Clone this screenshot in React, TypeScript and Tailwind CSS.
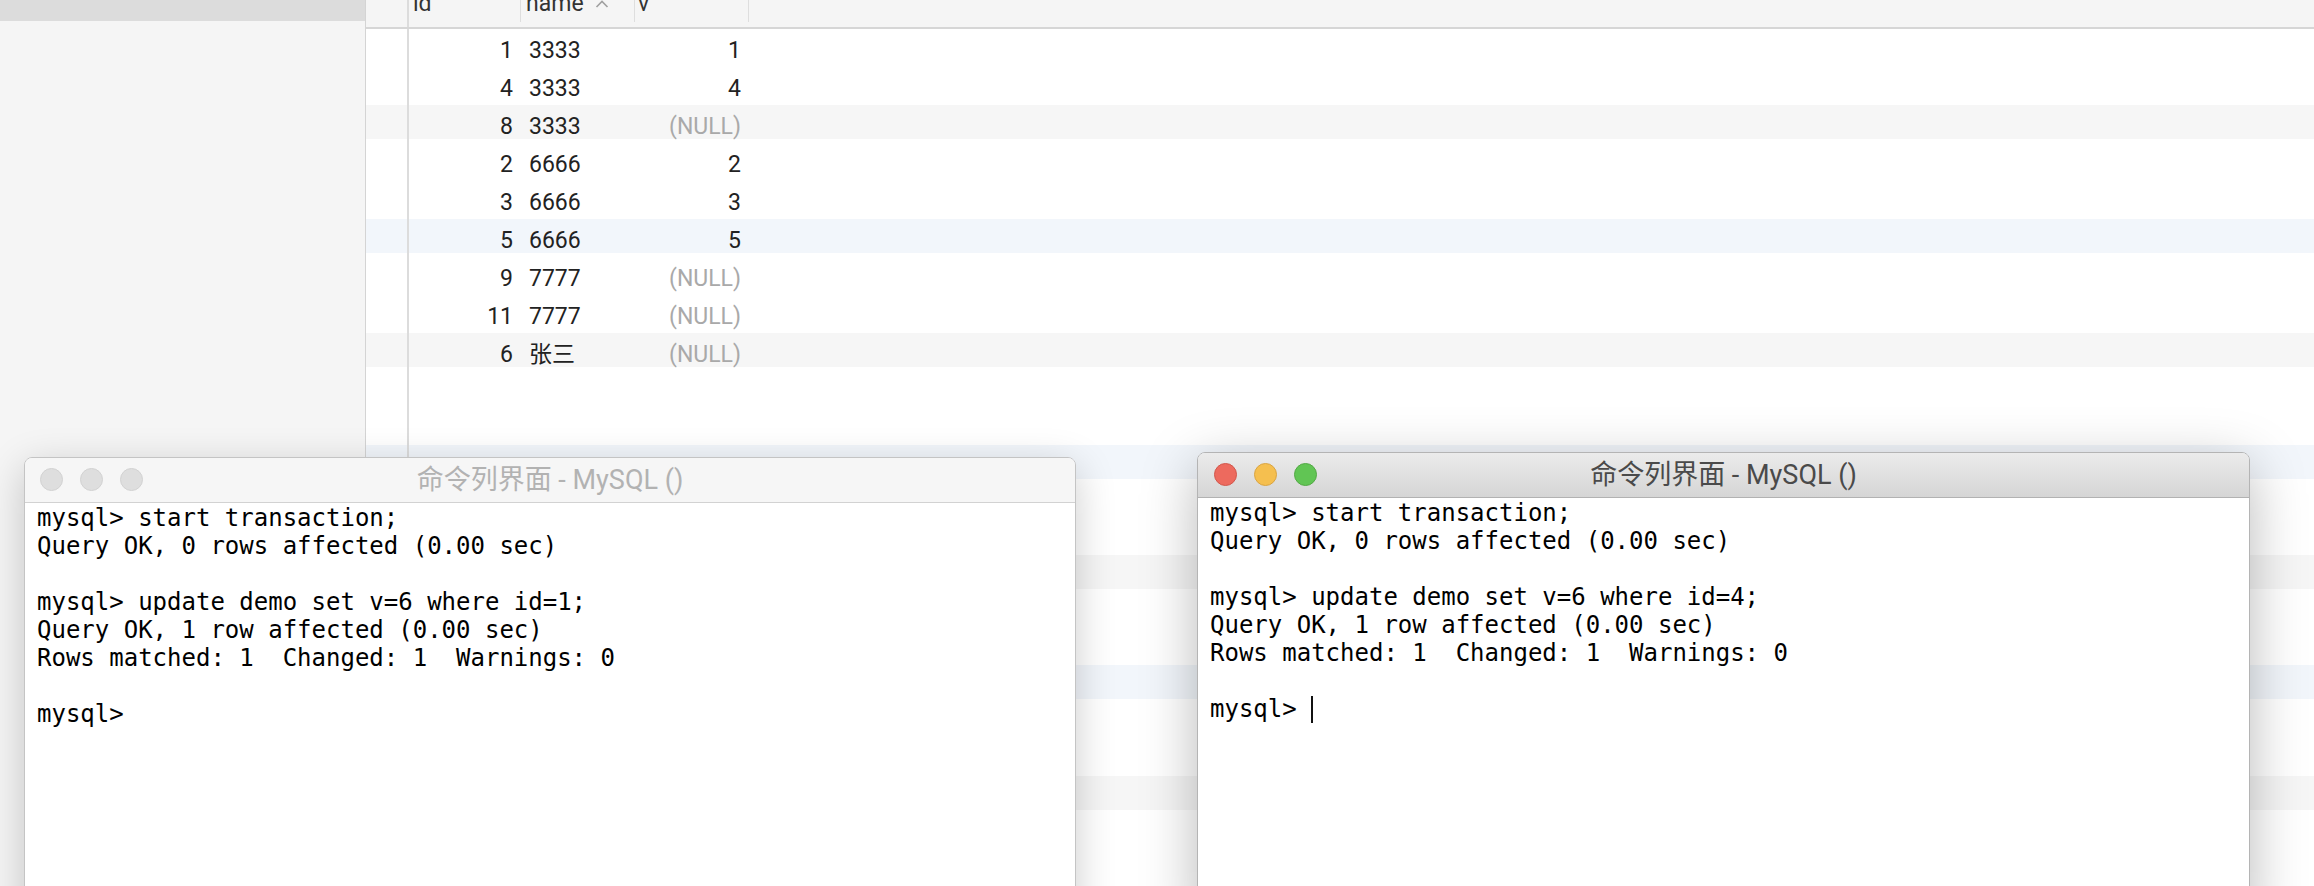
import React from "react";

type Row = { id: string; name: string; v: string | null };

const data: Row[] = [
  { id: "1", name: "3333", v: "1" },
  { id: "4", name: "3333", v: "4" },
  { id: "8", name: "3333", v: null },
  { id: "2", name: "6666", v: "2" },
  { id: "3", name: "6666", v: "3" },
  { id: "5", name: "6666", v: "5" },
  { id: "9", name: "7777", v: null },
  { id: "11", name: "7777", v: null },
  { id: "6", name: "张三", v: null },
];

const GRAY_BAND = "bg-[linear-gradient(to_bottom,#f6f6f6_34px,transparent_34px)]";
const BLUE_BAND = "bg-[linear-gradient(to_bottom,#f2f6fb_34px,transparent_34px)]";

function bandFor(i: number): string {
  if (i % 3 !== 0) return "";
  return (i / 3) % 2 === 1 ? GRAY_BAND : BLUE_BAND;
}

function TableRow({ index, row }: { index: number; row?: Row }) {
  return (
    <div className={"flex h-[38px] " + bandFor(index)}>
      <div className="w-[41px] shrink-0" />
      <div className="flex flex-1 border-l-2 border-[#dcdcdc] pt-[6px] items-center text-[23px] text-[#222222]">
        {row && (
          <>
            <div className="w-[112px] pr-[8px] text-right">{row.id}</div>
            <div className="w-[114px] pl-[8px]">{row.name}</div>
            <div className={"w-[114px] pr-[8px] text-right " + (row.v === null ? "text-[#a9a9a9]" : "")}>
              {row.v === null ? "(NULL)" : row.v}
            </div>
          </>
        )}
      </div>
    </div>
  );
}

function Header() {
  return (
    <div className="flex h-[30px] bg-[#f5f5f5] border-b-2 border-[#d6d6d6] overflow-hidden">
      <div className="w-[41px] shrink-0" />
      <div className="flex flex-1 border-l-2 border-[#dcdcdc] text-[23px] text-[#333333] leading-[23px]">
        <div className="w-[112px] h-[22px] border-r border-[#dedede] pl-[4px]">
          <div className="-mt-[8px]">id</div>
        </div>
        <div className="w-[114px] h-[22px] border-r border-[#dedede] pl-[5px] flex">
          <div className="-mt-[8px]">name</div>
          <svg width="14" height="8" viewBox="0 0 14 8" className="ml-[11px]">
            <polyline points="1.5,7 7,1.5 12.5,7" fill="none" stroke="#a0a0a0" strokeWidth="1.6" />
          </svg>
        </div>
        <div className="w-[114px] h-[22px] border-r border-[#dedede] pl-[3px]">
          <div className="-mt-[8px]">v</div>
        </div>
      </div>
    </div>
  );
}

type TermProps = {
  active: boolean;
  lines: string[];
  pos: string;
};

function Lights({ active }: { active: boolean }) {
  if (!active) {
    return (
      <div className="absolute left-[15px] top-[10px] flex gap-[17px]">
        <div className="w-[23px] h-[23px] rounded-full bg-[#dedede] border border-[#d2d2d2]" />
        <div className="w-[23px] h-[23px] rounded-full bg-[#dedede] border border-[#d2d2d2]" />
        <div className="w-[23px] h-[23px] rounded-full bg-[#dedede] border border-[#d2d2d2]" />
      </div>
    );
  }
  return (
    <div className="absolute left-[16px] top-[10px] flex gap-[17px]">
      <div className="w-[23px] h-[23px] rounded-full bg-[#ed6a5e] border border-[#d2574b]" />
      <div className="w-[23px] h-[23px] rounded-full bg-[#f5bf4f] border border-[#d9a442]" />
      <div className="w-[23px] h-[23px] rounded-full bg-[#61c554] border border-[#53a945]" />
    </div>
  );
}

function TermWindow({ active, lines, pos }: TermProps) {
  return (
    <div
      className={
        pos +
        " flex flex-col rounded-t-[8px] overflow-hidden border " +
        (active
          ? "border-[#b4b4b4] shadow-[0_14px_56px_rgba(0,0,0,0.28)]"
          : "border-[#c4c4c4] shadow-[0_10px_40px_rgba(0,0,0,0.2)]")
      }
    >
      <div
        className={
          "relative h-[45px] shrink-0 flex items-center justify-center border-b " +
          (active
            ? "bg-[linear-gradient(to_bottom,#ebebeb,#d5d5d5)] border-[#b2b2b2] text-[#4a4a4a]"
            : "bg-[#f6f6f6] border-[#d2d2d2] text-[#b2b2b2]")
        }
      >
        <Lights active={active} />
        <span className="text-[27px] leading-[30px] font-['Roboto','Noto_Sans_CJK_SC',sans-serif]">
          命令列界面 - MySQL ()
        </span>
      </div>
      <div className="flex-1 bg-white pl-[12px] pt-[1px] font-['DejaVu_Sans_Mono','Liberation_Mono',monospace] text-[24px] leading-[28px] text-black whitespace-pre">
        {lines.map((l, i) => (
          <div key={i} className="h-[28px] flex items-center">
            <span>{l}</span>
            {active && i === lines.length - 1 && (
              <span className="inline-block w-[2px] h-[27px] bg-[#111111]" />
            )}
          </div>
        ))}
      </div>
    </div>
  );
}

export default function App() {
  const rowCount = 23;
  const rowsEls = [];
  for (let i = 1; i <= rowCount; i++) {
    rowsEls.push(<TableRow key={i} index={i} row={data[i - 1]} />);
  }

  const leftLines = [
    "mysql> start transaction;",
    "Query OK, 0 rows affected (0.00 sec)",
    "",
    "mysql> update demo set v=6 where id=1;",
    "Query OK, 1 row affected (0.00 sec)",
    "Rows matched: 1  Changed: 1  Warnings: 0",
    "",
    "mysql> ",
  ];
  const rightLines = [
    "mysql> start transaction;",
    "Query OK, 0 rows affected (0.00 sec)",
    "",
    "mysql> update demo set v=6 where id=4;",
    "Query OK, 1 row affected (0.00 sec)",
    "Rows matched: 1  Changed: 1  Warnings: 0",
    "",
    "mysql> ",
  ];

  return (
    <div className="relative w-[2314px] h-[886px] overflow-hidden bg-white flex font-['Roboto','Noto_Sans_CJK_SC',sans-serif]">
      <div className="w-[366px] shrink-0 bg-[#f5f5f5] border-r border-[#d4d4d4] flex flex-col">
        <div className="h-[21px] bg-[#dcdcdc]" />
      </div>
      <div className="flex-1 flex flex-col">
        <Header />
        {rowsEls}
      </div>

      <TermWindow active={false} lines={leftLines} pos="absolute left-[24px] top-[457px] w-[1052px] h-[470px]" />
      <TermWindow active={true} lines={rightLines} pos="absolute left-[1197px] top-[452px] w-[1053px] h-[470px]" />
    </div>
  );
}
